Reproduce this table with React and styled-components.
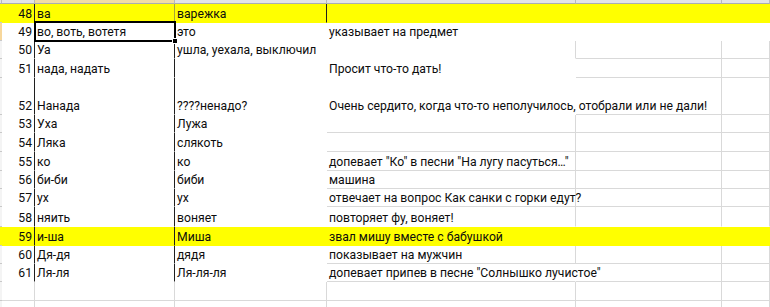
import React from "react";
import styled, { createGlobalStyle } from "styled-components";

const Global = createGlobalStyle`
  html, body { margin: 0; padding: 0; background: #ffffff; overflow: hidden; }
  body { font-family: Roboto, "Liberation Sans", sans-serif; }
`;

const COLS = "2px 33px 140px 152px 249px 146px 1fr";
const GRID = "#d9d9d9";
const DARK = "#1f1f1f";
const YELLOW = "#ffff00";

const Sheet = styled.div`
  width: 770px;
  height: 307px;
  overflow: hidden;
  display: flex;
  flex-direction: column;
`;

const HeaderStrip = styled.div`
  display: grid;
  grid-template-columns: ${COLS};
  height: 4px;
  flex: none;
`;

const HeaderCell = styled.div`
  background: ${(p) => (p.$active ? "#f1dca6" : "#e3e4e6")};
  border-right: 1px solid #b5b8bd;
  border-bottom: 1px solid #a9adb3;
  box-sizing: border-box;
`;

const Row = styled.div`
  display: grid;
  grid-template-columns: ${COLS};
  height: ${(p) => p.$h}px;
  flex: none;
`;

const Edge = styled.div`
  background: ${(p) => p.$bg};
  border-bottom: 1px solid ${(p) => p.$bc};
  box-sizing: border-box;
`;

const Cell = styled.div`
  position: relative;
  display: flex;
  align-items: flex-end;
  justify-content: ${(p) => (p.$right ? "flex-end" : "flex-start")};
  padding: ${(p) => (p.$right ? "0 2px 0 0" : "0 0 0 2px")};
  background: ${(p) => p.$bg};
  border-right: 1px solid ${(p) => p.$rc};
  border-bottom: 1px solid ${(p) => p.$bc};
  box-sizing: border-box;
  white-space: nowrap;
  min-width: 0;
  font-size: 12.2px;
  line-height: 15px;
  color: #0d0d0d;
`;

const Selection = styled.div`
  position: absolute;
  left: -1px;
  top: -2px;
  width: 142px;
  height: 21px;
  border: 2px solid #000;
  box-sizing: border-box;
  pointer-events: none;
  z-index: 2;
`;

const FillHandle = styled.div`
  position: absolute;
  right: -4px;
  bottom: -4px;
  width: 6px;
  height: 6px;
  background: #000;
  border: 1px solid #fff;
  box-sizing: border-box;
`;

// fill: 'y' yellow, 'w' white fill, '.' unfilled (shows gridlines)
const rows = [
  { n: "48", h: 19, v: ["ва", "варежка", "", "", ""], fill: "yyyyyy" },
  { n: "49", h: 18, v: ["во, воть, вотетя", "это", "указывает на предмет", "", ""], fill: "wwwwww", sel: true },
  { n: "50", h: 18, v: ["Уа", "ушла, уехала, выключил", "", "", ""], fill: "www..." },
  { n: "51", h: 19, v: ["нада, надать", "", "Просит что-то дать!", "", ""], fill: "wwww.." },
  { n: "52", h: 37, v: ["Нанада", "????ненадо?", "Очень сердито, когда что-то неполучилось, отобрали или не дали!", "", ""], fill: "wwww..", over: true },
  { n: "53", h: 18, v: ["Уха", "Лужа", "", "", ""], fill: "www..." },
  { n: "54", h: 19, v: ["Ляка", "слякоть", "", "", ""], fill: "www..." },
  { n: "55", h: 19, v: ["ко", "ко", "допевает \"Ко\" в песни \"На лугу пасуться…\"", "", ""], fill: "www..." },
  { n: "56", h: 18, v: ["би-би", "биби", "машина", "", ""], fill: "www..." },
  { n: "57", h: 18, v: ["ух", "ух", "отвечает на вопрос Как санки с горки едут?", "", ""], fill: "www..." },
  { n: "58", h: 20, v: ["няить", "воняет", "повторяет фу, воняет!", "", ""], fill: "www..." },
  { n: "59", h: 19, v: ["и-ша", "Миша", "звал мишу вместе с бабушкой", "", ""], fill: "yyyyyy" },
  { n: "60", h: 18, v: ["Дя-дя", "дядя", "показывает на мужчин", "", ""], fill: "www..." },
  { n: "61", h: 18, v: ["Ля-ля", "Ля-ля-ля", "допевает припев в песне \"Солнышко лучистое\"", "", ""], fill: "www...", over: true },
  { n: "", h: 19, v: ["", "", "", "", ""], fill: "......", plain: true },
  { n: "", h: 19, v: ["", "", "", "", ""], fill: "......", plain: true },
];

const bgOf = (f) => (f === "y" ? YELLOW : f === "w" ? "#ffffff" : "transparent");
const unfilled = (f) => f === "." || f === undefined;

export default function App() {
  return (
    <>
      <Global />
      <Sheet>
        <HeaderStrip>
          <HeaderCell />
          <HeaderCell />
          <HeaderCell $active />
          <HeaderCell />
          <HeaderCell />
          <HeaderCell />
          <HeaderCell />
        </HeaderStrip>
        {rows.map((r, ri) => {
          const next = rows[ri + 1];
          const cells = [r.n, ...r.v];
          const rowFill = r.fill[0];
          const edgeBg = rowFill === "y" ? YELLOW : r.sel ? "#f7d79c" : "#f4f4f4";
          return (
            <Row key={ri} $h={r.h}>
              <Edge $bg={edgeBg} $bc="#c9c9c9" />
              {cells.map((text, ci) => {
                const f = r.fill[ci];
                const fr = r.fill[ci + 1];
                const fb = next ? next.fill[ci] : ".";
                let rc = unfilled(f) && unfilled(fr) ? GRID : "transparent";
                const bc = unfilled(f) && unfilled(fb) ? GRID : "transparent";
                if (r.over && ci === 3) rc = "transparent";
                if (!r.plain && ci === 0) rc = DARK;
                if (!r.plain && ci === 1) rc = r.n === "48" ? "#a6a63a" : DARK;
                if (r.n === "48" && ci === 2) rc = DARK;
                return (
                  <Cell key={ci} $right={ci === 0} $bg={bgOf(f)} $rc={rc} $bc={bc}>
                    {text}
                    {r.sel && ci === 1 && (
                      <Selection>
                        <FillHandle />
                      </Selection>
                    )}
                  </Cell>
                );
              })}
            </Row>
          );
        })}
      </Sheet>
    </>
  );
}
